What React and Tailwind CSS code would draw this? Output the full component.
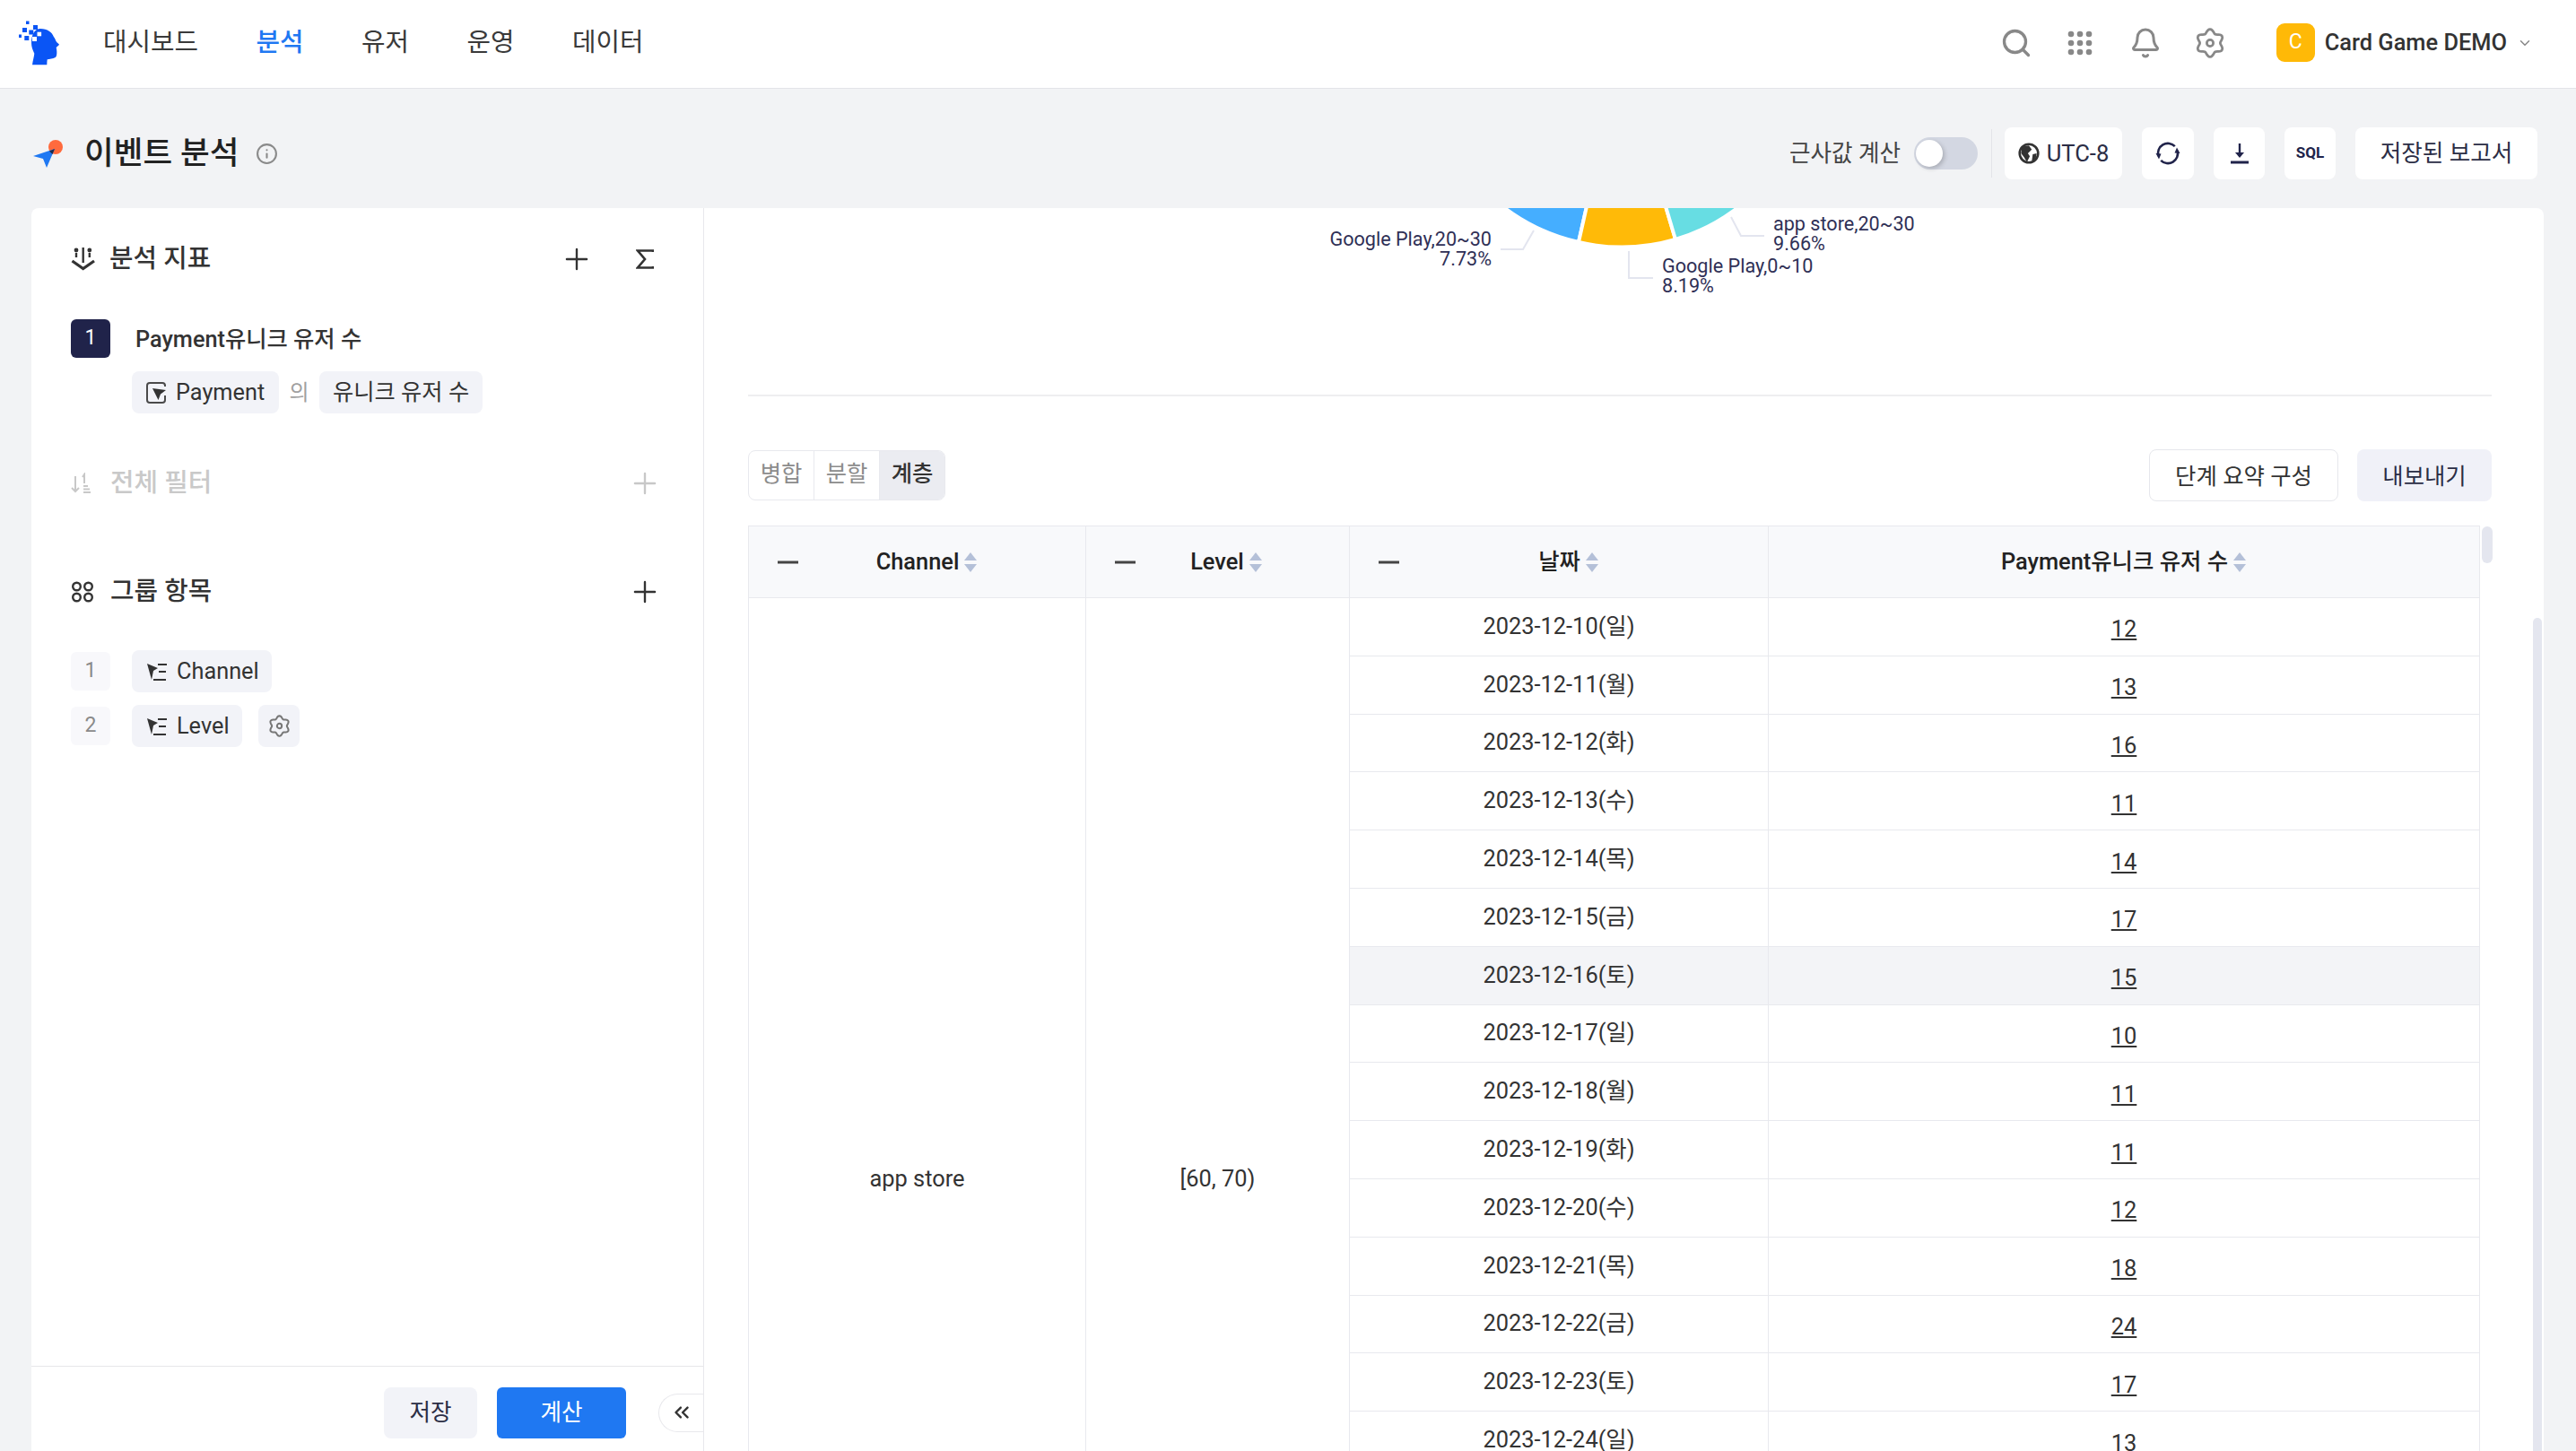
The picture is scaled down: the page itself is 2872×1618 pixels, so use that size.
import React from "react";
import { Search, Bell, Plus, ChevronDown, Info, ChevronsLeft } from "lucide-react";

const FONT = "font-['Roboto','Noto_Sans_CJK_KR',sans-serif]";

const rows = [
  ["2023-12-10(일)", 12], ["2023-12-11(월)", 13], ["2023-12-12(화)", 16], ["2023-12-13(수)", 11], ["2023-12-14(목)", 14],
  ["2023-12-15(금)", 17], ["2023-12-16(토)", 15], ["2023-12-17(일)", 10], ["2023-12-18(월)", 11], ["2023-12-19(화)", 11],
  ["2023-12-20(수)", 12], ["2023-12-21(목)", 18], ["2023-12-22(금)", 24], ["2023-12-23(토)", 17], ["2023-12-24(일)", 13],
];

const gearPath = (() => {
  const pts = [];
  for (let i = 0; i < 72; i++) {
    const a = (i / 72) * Math.PI * 2;
    const r = 12.6 + 1.9 * Math.cos(6 * (a + Math.PI / 2));
    pts.push((16 + r * Math.cos(a)).toFixed(2) + " " + (16 + r * Math.sin(a)).toFixed(2));
  }
  return "M" + pts.join(" L") + " Z";
})();

function Logo() {
  return (
    <svg width="48" height="50" viewBox="0 0 48 50" className="shrink-0">
      <path fill="#0a55f5" d="M16 25 C16 15 20 9 26 9 C34 9 39 13 41 18.3 C42.5 20 43 22 43.7 23.3 C45 25 46.5 26 47 26.7 C46 28 44.5 29 43.7 30 C44 32 44.6 34 44.3 36.7 C44.2 39 43.6 40.5 42.7 41 C40 42.5 36 43 33.7 43.3 C33.5 45 33.3 47 33.3 49.3 L17 49.3 C17.5 45 19 40 19.3 36.7 C17.5 33 16 29 16 25 Z" />
      <g fill="#0a55f5">
        <rect x="10" y="0.5" width="3.5" height="3.5" />
        <rect x="18" y="5" width="5" height="5" />
        <rect x="6" y="8" width="5" height="5" />
        <rect x="13.3" y="10.5" width="5" height="5" />
        <rect x="2" y="15.5" width="3" height="3.5" />
        <rect x="8.3" y="17" width="5" height="5" />
        <rect x="18" y="15" width="5" height="3" />
      </g>
      <g fill="#fff">
        <rect x="17" y="18" width="5" height="5" />
        <rect x="22.5" y="12.7" width="4.6" height="4.6" />
      </g>
    </svg>
  );
}

function Apps() {
  const d = [];
  for (let y = 0; y < 3; y++) for (let x = 0; x < 3; x++) d.push(<circle key={x + "-" + y} cx={4 + x * 10} cy={4 + y * 10} r="3.3" fill="#888" />);
  return <svg width="28" height="28" viewBox="0 0 28 28" className="overflow-visible">{d}</svg>;
}

function Gear({ size = 32, color = "#888", sw = 2.6 }) {
  return (
    <svg width={size} height={size} viewBox="0 0 32 32" fill="none" stroke={color} strokeWidth={sw} strokeLinejoin="round">
      <path d={gearPath} />
      <circle cx="16" cy="16" r="3.4" />
    </svg>
  );
}

function Sort() {
  return (
    <svg width="16" height="24" viewBox="0 0 16 24" className="shrink-0">
      <path d="M8 1 L15 10 L1 10 Z" fill="#b4c0d8" />
      <path d="M8 23 L15 14 L1 14 Z" fill="#b4c0d8" />
    </svg>
  );
}

function MetricIcon() {
  return (
    <svg width="28" height="26" viewBox="0 0 28 26" fill="none" stroke="#333">
      <path d="M13.7 0 V17" strokeWidth="2.4" />
      <circle cx="6" cy="3" r="2.4" fill="#333" stroke="none" />
      <path d="M6 6 V11" strokeWidth="2.4" />
      <circle cx="20.8" cy="3" r="2.4" fill="#333" stroke="none" />
      <path d="M20.8 6 V11" strokeWidth="2.4" />
      <path d="M1.5 15 L13.7 23.5 L26 15" strokeWidth="3.2" />
    </svg>
  );
}

function FilterIcon() {
  return (
    <svg width="24" height="24" viewBox="0 0 24 24" fill="none" stroke="#c8c8c8" strokeWidth="2">
      <path d="M5 4 V21 M1 17 L5 21 L9 17" />
      <path d="M13 5 L15 2 V12" />
      <path d="M14 15 H19 M14 18.5 H21 M14 22 H22" />
    </svg>
  );
}

function GroupIcon() {
  return (
    <svg width="26" height="24" viewBox="0 0 26 24" fill="none" stroke="#333" strokeWidth="2.4">
      <circle cx="6.5" cy="6" r="4.3" /><circle cx="19.5" cy="6" r="4.3" />
      <circle cx="6.5" cy="18" r="4.3" /><circle cx="19.5" cy="18" r="4.3" />
    </svg>
  );
}

function EventIcon() {
  return (
    <svg width="23" height="24" viewBox="0 0 23 24" fill="none" className="shrink-0">
      <path d="M21 5 V4 A3 3 0 0 0 18 1 H4 A3 3 0 0 0 1 4 V20 A3 3 0 0 0 4 23 H18 A3 3 0 0 0 21 20 V15" stroke="#4a4a4a" strokeWidth="2" />
      <path d="M7 7 L22 9 L16 13.5 L13.5 20 Z" fill="#333" />
    </svg>
  );
}

function DimIcon() {
  return (
    <svg width="24" height="22" viewBox="0 0 24 22" fill="none" className="shrink-0">
      <path d="M1 2 L13 7 L8 10 L6 20 Z" fill="#333" />
      <path d="M13 3 H23 M14 11 H22 M8 20 H22" stroke="#333" strokeWidth="2" />
    </svg>
  );
}

function Chip({ children, className = "" }) {
  return <div className={"flex h-[47px] shrink-0 items-center rounded-[8px] bg-[#f2f3f8] text-[25.3px] text-[#333] " + className}>{children}</div>;
}

function PlusBtn({ color = "#333" }) {
  return <Plus size={38} color={color} strokeWidth={1.5} className="-mx-[5px] -my-[5px] shrink-0" />;
}

function LeftPanel() {
  return (
    <aside className="flex h-full w-[750px] shrink-0 flex-col border-r border-[#e8e8ec]">
      <div className="flex-1 pl-[44px] pr-[51px]">
        <div className="mt-[33px] flex h-[48px] items-center">
          <MetricIcon />
          <span className="ml-[15px] flex-1 text-[28.8px] font-medium text-[#333]">분석 지표</span>
          <PlusBtn />
          <span className="ml-[48px] flex h-[28px] w-[28px] items-center justify-center">
            <svg width="20" height="22" viewBox="0 0 20 22" fill="none" stroke="#333" strokeWidth="2.6"><path d="M19 3 V1.5 H2 L10 11 L2 20.5 H19 V19" /></svg>
          </span>
        </div>
        <div className="mt-[43px] flex h-[43px] items-center">
          <div className="flex h-[43px] w-[44px] items-center justify-center rounded-[6px] bg-[#20234a] text-[23px] text-white">1</div>
          <div className="ml-[28px] pt-[2px] text-[25.3px] font-medium text-[#333]">Payment유니크 유저 수</div>
        </div>
        <div className="mt-[15px] ml-[68px] flex items-center">
          <Chip className="w-[164px] pl-[16px]"><EventIcon /><span className="ml-[10px]">Payment</span></Chip>
          <span className="mx-[11.5px] text-[24px] leading-none text-[#a0a0a0]">의</span>
          <Chip className="w-[182px] justify-center">유니크 유저 수</Chip>
        </div>
        <div className="mt-[57px] flex h-[42px] items-center">
          <FilterIcon />
          <span className="ml-[20px] flex-1 text-[28.8px] font-medium text-[#c9c9c9]">전체 필터</span>
          <PlusBtn color="#c8c8c8" />
        </div>
        <div className="mt-[79px] flex h-[42px] items-center">
          <GroupIcon />
          <span className="ml-[18px] flex-1 text-[28.8px] font-medium text-[#333]">그룹 항목</span>
          <PlusBtn />
        </div>
        <div className="mt-[44px] flex h-[47px] items-center">
          <div className="flex h-[43px] w-[44px] items-center justify-center rounded-[6px] bg-[#f8f8fb] text-[23px] text-[#8a8a8a]">1</div>
          <Chip className="ml-[24px] w-[156px] pl-[16px]"><DimIcon /><span className="ml-[10px]">Channel</span></Chip>
        </div>
        <div className="mt-[14px] flex h-[47px] items-center">
          <div className="flex h-[43px] w-[44px] items-center justify-center rounded-[6px] bg-[#f8f8fb] text-[23px] text-[#8a8a8a]">2</div>
          <Chip className="ml-[24px] w-[123px] pl-[16px]"><DimIcon /><span className="ml-[10px]">Level</span></Chip>
          <Chip className="ml-[18px] w-[46px] justify-center"><Gear size={25} color="#777" sw={2.6} /></Chip>
        </div>
      </div>
      <div className="flex h-[95px] shrink-0 items-center justify-end border-t border-[#e6e6e9] pt-[8px]">
        <button className="h-[57px] w-[104px] rounded-[8px] bg-[#f2f3f8] text-[25.6px] text-[#2b2d45]">저장</button>
        <button className="ml-[22px] h-[57px] w-[144px] rounded-[6px] bg-[#1f78f2] text-[25.6px] text-white">계산</button>
        <button className="ml-[36px] flex h-[43px] w-[50px] items-center justify-center rounded-l-full border border-r-0 border-[#e8e8ec] bg-white">
          <ChevronsLeft size={26} color="#333" strokeWidth={2.2} />
        </button>
      </div>
    </aside>
  );
}

function Chart() {
  return (
    <svg viewBox="785 232 2051 208" width="2051" height="208" className="block shrink-0">
      <g stroke="#fff" strokeWidth="4">
        <path fill="#45aeff" d="M1807 62 L1630 182 A214 214 0 0 0 1760 270 Z" />
        <path fill="#ffba08" d="M1807 62 L1760 270 A214 214 0 0 0 1868 267 Z" />
        <path fill="#67dde3" d="M1807 62 L1868 267 A214 214 0 0 0 1984 182 Z" />
      </g>
      <g fill="none" stroke="#e3e5ef" strokeWidth="2">
        <path d="M1710 257 L1698 278 H1673" />
        <path d="M1930 242 L1941 263 H1967" />
        <path d="M1816 280 V310 H1843" />
      </g>
      <g className="fill-[#2f3056] text-[21.6px]">
        <text x="1663" y="274" textAnchor="end">Google Play,20~30</text>
        <text x="1663" y="296" textAnchor="end">7.73%</text>
        <text x="1977" y="257">app store,20~30</text>
        <text x="1977" y="279">9.66%</text>
        <text x="1853" y="304">Google Play,0~10</text>
        <text x="1853" y="326">8.19%</text>
      </g>
    </svg>
  );
}

function HeadCell({ label, minus, className = "" }) {
  return (
    <div className={"relative flex items-center justify-center gap-[5px] border-r border-[#e8e9ee] text-[25.4px] font-medium text-[#222] " + className}>
      {minus && <span className="absolute left-[32px] top-1/2 h-[3px] w-[23px] -translate-y-1/2 bg-[#444]" />}
      <span>{label}</span>
      <Sort />
    </div>
  );
}

function DataTable() {
  return (
    <div className="flex min-h-0 flex-1">
      <div className="min-h-0 w-[1931px] shrink-0 overflow-hidden">
        <div className="grid h-[81px] w-[1931px] grid-cols-[376px_294px_467px_793px] border-y border-l border-[#e8e9ee] bg-[#f8f9fb]">
          <HeadCell label="Channel" minus className="pl-[22px]" />
          <HeadCell label="Level" minus className="pl-[20px]" />
          <HeadCell label="날짜" minus className="pl-[22px]" />
          <HeadCell label="Payment유니크 유저 수" />
        </div>
        <div className="grid w-[1931px] grid-cols-[376px_294px_1260px] border-l border-[#e8e9ee] text-[25.4px] text-[#333]">
          <div className="flex h-[1295px] items-center justify-center border-r border-[#e8e9ee]">app store</div>
          <div className="flex h-[1295px] items-center justify-center border-r border-[#e8e9ee]">[60, 70)</div>
          <div>
            {rows.map(([d, v], i) => (
              <div key={d} className={"grid h-[64.8px] grid-cols-[467px_793px] border-b border-[#e8e9ee] " + (i === 6 ? "bg-[#f3f4f7]" : "")}>
                <div className="flex items-center justify-center border-r border-[#e8e9ee] pb-[2px]">{d}</div>
                <div className="flex items-center justify-center border-r border-[#e8e9ee] pt-[5px]"><span className="underline">{v}</span></div>
              </div>
            ))}
          </div>
        </div>
      </div>
      <div className="ml-[2px] mt-[1px] h-[41px] w-[12px] rounded-full bg-[#e4e6ef]" />
    </div>
  );
}

function RightPanel() {
  return (
    <main className="relative flex h-full min-w-0 flex-1 flex-col pl-[49px]">
      <div className="-ml-[49px]"><Chart /></div>
      <div className="h-[2px] w-[1944px] shrink-0 bg-[#eeeef0]" />
      <div className="mt-[59px] flex h-[58px] w-[1944px] shrink-0 items-center">
        <div className="flex h-[56px] overflow-hidden rounded-[8px] border border-[#e8e9ee] text-[25.4px]">
          <div className="flex w-[73px] items-center justify-center border-r border-[#e8e9ee] pb-[4px] text-[#8c8c8c]">병합</div>
          <div className="flex w-[73px] items-center justify-center border-r border-[#e8e9ee] pb-[4px] text-[#8c8c8c]">분할</div>
          <div className="flex w-[72px] items-center justify-center bg-[#ebecf1] pb-[4px] font-medium text-[#333]">계층</div>
        </div>
        <button className="ml-auto h-[58px] w-[211px] rounded-[8px] border border-[#e6e7ec] bg-white pt-[2px] text-[25.4px] text-[#333]">단계 요약 구성</button>
        <button className="ml-[21px] h-[58px] w-[150px] rounded-[8px] bg-[#f0f1f8] pt-[2px] text-[25.4px] text-[#2b2d45]">내보내기</button>
      </div>
      <div className="mt-[27px] flex min-h-0 flex-1"><DataTable /></div>
      <div className="absolute bottom-0 right-[2px] top-[457px] w-[10px] rounded-t-full bg-[#e4e6ef]" />
    </main>
  );
}

export default function App() {
  return (
    <div className={"flex h-screen w-full flex-col overflow-hidden bg-[#f2f3f5] " + FONT}>
      <header className="flex h-[99px] shrink-0 items-center border-b border-[#e3e4e8] bg-white pb-[3px] pl-[19px] pr-[48px]">
        <Logo />
        <nav className="ml-[48px] flex gap-[64.5px] text-[28.8px] text-[#3a3a3a]">
          <span>대시보드</span>
          <span className="font-medium text-[#1f78f2]">분석</span>
          <span>유저</span>
          <span>운영</span>
          <span>데이터</span>
        </nav>
        <div className="ml-auto flex items-center">
          <Search size={36} color="#888" strokeWidth={2.2} />
          <span className="ml-[39px]"><Apps /></span>
          <Bell size={36} color="#888" strokeWidth={2} className="ml-[41px]" />
          <span className="ml-[37px]"><Gear size={34} /></span>
          <div className="ml-[57px] flex h-[43px] w-[43px] items-center justify-center rounded-[9px] bg-[#ffb907] text-[23px] text-white">C</div>
          <span className="ml-[11px] text-[25.4px] font-medium text-[#333]">Card Game DEMO</span>
          <ChevronDown size={18} color="#888" className="ml-[11px]" />
        </div>
      </header>
      <div className="flex h-[133px] shrink-0 items-center pl-[37px] pr-[43px] pt-[11px]">
        <svg width="33" height="32" viewBox="0 0 33 32">
          <circle cx="25" cy="9" r="8" fill="#ff6a3d" />
          <path d="M0 19 L24 11 L15 32 L11 22 Z" fill="#1f78f2" />
          <path d="M18 13.5 L24 11 L21.5 17 Z" fill="#1e2a4a" />
        </svg>
        <h1 className="ml-[24px] pt-[2px] text-[35.6px] font-medium text-[#222]">이벤트 분석</h1>
        <Info size={25} color="#8a8a8a" strokeWidth={2} className="ml-[18px]" />
        <span className="ml-auto text-[25.6px] text-[#444]">근사값 계산</span>
        <div className="relative ml-[15px] h-[36px] w-[71px] rounded-full bg-[#d3d7e2]">
          <span className="absolute left-[2px] top-[3px] h-[30px] w-[30px] rounded-full bg-white shadow-[2px_2px_5px_rgba(0,0,0,0.2)]" />
        </div>
        <div className="ml-[15px] h-[54px] w-px bg-[#e3e4e8]" />
        <button className="ml-[14px] flex h-[58px] w-[131px] items-center justify-center gap-[8px] rounded-[8px] bg-white text-[25.6px] text-[#2b2d45]">
          <svg width="24" height="26" viewBox="0 0 22 24" fill="none"><circle cx="11" cy="12" r="9.5" stroke="#333" strokeWidth="2.4" /><path d="M4 5 L11 4 L14 8 L10 12 L12 15 L9 21 L6 16 L3 12 Z M15 13 L19 12 L18 18 L14 20 Z" fill="#333" /></svg>
          UTC-8
        </button>
        <button className="ml-[22px] flex h-[58px] w-[58px] items-center justify-center rounded-[8px] bg-white">
          <svg width="26" height="26" viewBox="0 0 26 26" fill="none" stroke="#20234a" strokeWidth="2.6" className="overflow-visible">
            <path d="M20.8 5.2 A11 11 0 0 0 2.4 16" />
            <path d="M5.2 20.8 A11 11 0 0 0 23.6 10" />
            <path d="M-0.5 13 L5.5 13.5 L3 19.5 Z M26.5 13 L20.5 12.5 L23 6.5 Z" fill="#20234a" strokeWidth="0" />
          </svg>
        </button>
        <button className="ml-[22px] flex h-[58px] w-[57px] items-center justify-center rounded-[8px] bg-white">
          <svg width="20" height="24" viewBox="0 0 20 24" fill="none" stroke="#20234a" strokeWidth="2.4"><path d="M10 1 V15" /><path d="M5 11 L10 17 L15 11 Z" fill="#20234a" strokeWidth="0" /><path d="M0 22 H20" strokeWidth="3" /></svg>
        </button>
        <button className="ml-[22px] flex h-[58px] w-[57px] items-center justify-center rounded-[8px] bg-white text-[17px] font-bold text-[#20234a]">SQL</button>
        <button className="ml-[22px] h-[58px] w-[203px] rounded-[8px] bg-white text-[25.6px] text-[#2b2d45]">저장된 보고서</button>
      </div>
      <div className="mx-[35px] mr-[36px] flex min-h-0 flex-1 overflow-hidden rounded-t-[8px] bg-white">
        <LeftPanel />
        <RightPanel />
      </div>
    </div>
  );
}
